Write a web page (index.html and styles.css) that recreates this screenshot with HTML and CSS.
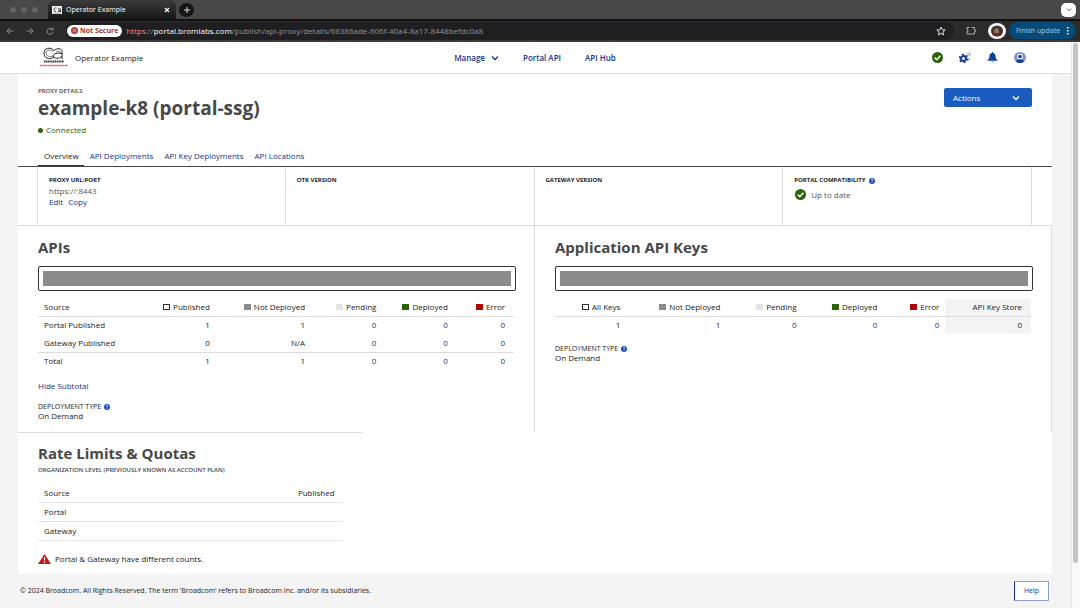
FILE: index.html
```html
<!DOCTYPE html>
<html lang="en">
<head>
<meta charset="utf-8">
<title>Operator Example</title>
<link rel="stylesheet" href="styles.css">
</head>
<body>
<svg class="defs" width="0" height="0" aria-hidden="true">
  <symbol id="check" viewBox="0 0 16 16"><circle cx="8" cy="8" r="8" fill="#2b6307"/><path d="M4 8.2l3 3 5.2-5.6" fill="none" stroke="#fff" stroke-width="2.2"/></symbol>
  <symbol id="info" viewBox="0 0 16 16"><circle cx="8" cy="8" r="8" fill="#1a4fb4"/><path d="M5.5 6c0-3.500 5-3.200 5-.4C10.500 7.500 8 7.600 8 9.600M8 11v2" fill="none" stroke="#fff" stroke-width="1.800"/></symbol>
  <symbol id="chevron" viewBox="0 0 16 16"><path d="M2 5l6 6 6-6" fill="none" stroke="currentColor" stroke-width="2.600"/></symbol>
</svg>
<div class="browser">
  <div class="tabstrip">
    <div class="lights"><i></i><i></i><i></i></div>
    <div class="tab">
      <svg class="favicon" viewBox="0 0 20 16"><rect width="20" height="16" fill="#f4f4f4"/><path d="M9 4C3 2 2 11 8 11M12 6c5-3 5 0 5 6M17 8c-5 0-6 4-1 3" fill="none" stroke="#222" stroke-width="1.800"/><path d="M3 14h14" stroke="#555"/></svg>
      <span class="tab-title">Operator Example</span>
      <button class="plain" aria-label="Close tab"><svg width="6" height="6" viewBox="0 0 6 6"><path d="M1 1l4 4M5 1L1 5" stroke="#fff" stroke-width="1.200"/></svg></button>
    </div>
    <button class="new-tab" aria-label="New tab"><svg width="8" height="8" viewBox="0 0 8 8"><path d="M4 1v6M1 4h6" stroke="#ddd"/></svg></button>
    <button class="tab-search" aria-label="Search tabs"><svg width="6" height="4" viewBox="0 0 8 6"><path d="M1 1l3 3 3-3" fill="none" stroke="#222" stroke-width="1.200"/></svg></button>
  </div>
  <div class="toolbar">
    <button class="plain nav" aria-label="Back"><svg width="8" height="8" viewBox="0 0 8 8"><path d="M7.500 4H1M4 1L1 4l3 3" fill="none" stroke="#8f8f8f"/></svg></button>
    <button class="plain nav" aria-label="Forward"><svg width="8" height="8" viewBox="0 0 8 8"><path d="M.5 4H7M4 1l3 3-3 3" fill="none" stroke="#8f8f8f"/></svg></button>
    <button class="plain nav" aria-label="Reload"><svg width="8" height="8" viewBox="0 0 8 8"><path d="M6.500 2.500A3 3 0 1 0 7 5M7 .5v2.500H4.500" fill="none" stroke="#8f8f8f"/></svg></button>
    <div class="address">
      <span class="insecure"><svg width="7" height="7" viewBox="0 0 7 7"><circle cx="3.500" cy="3.500" r="3.500" fill="#b3403a"/><path d="M2 2l3 3M5 2L2 5" stroke="#f5b5ae"/></svg>Not Secure</span>
      <span class="url"><b class="scheme">https</b>://<b>portal.bromlabs.com</b>/publish/api-proxy/details/68386ade-606f-40a4-8a17-8448befdc0a8</span>
      <button class="plain" aria-label="Bookmark"><svg width="10" height="10" viewBox="0 0 10 10"><path d="M5 1l1.200 2.800 3 .2-2.300 2 .7 3L5 7.400 2.400 9l.7-3L.8 4l3-.2z" fill="none" stroke="#ddd"/></svg></button>
    </div>
    <button class="plain" aria-label="Extensions"><svg width="10" height="9" viewBox="0 0 10 9"><path d="M1 1.500h2.500M5.500 1.500H8.500V4h1v1.500h-1V8H1V5.500h1V4H1V1.500" fill="none" stroke="#aaa"/></svg></button>
    <svg class="avatar" viewBox="0 0 18 16"><ellipse cx="9" cy="8" rx="9" ry="8" fill="#fff"/><ellipse cx="9" cy="8" rx="6" ry="5.500" fill="#403230"/><ellipse cx="8.500" cy="8.500" rx="2.500" ry="3.300" fill="#a0705c"/><path d="M4 11c2 3 8 3 10 0l-3-1H7z" fill="#6f2622"/></svg>
    <button class="update">Finish update<svg width="3" height="9" viewBox="0 0 3 9"><g fill="#fff"><rect x="1" y="1" width="1.500" height="1.500"/><rect x="1" y="4" width="1.500" height="1.500"/><rect x="1" y="7" width="1.500" height="1.500"/></g></svg></button>
  </div>
</div>

<div class="view">
<div class="page">
  <header class="app-header">
    <div class="brand">
      <svg class="logo" viewBox="0 0 28 21"><g fill="none" stroke="#222"><path d="M14 3.500C10-.5 4 1 4 6s5 7.500 10 4" stroke-width="1"/><path d="M14 3.500c3-3 8-2 8 1V12M22 6.500c-5-1-8.500 0-8.500 2.500 0 3 6 3 8.500 0" stroke-width="1"/><path d="M13 4.500C9 2 6 3 6 6s4 4.500 7 3M16 5c2-1.500 4-1 4 1" stroke-width=".6"/></g><path d="M4 14.500h20" stroke="#333" stroke-width="1.800" stroke-dasharray="1.300 .5"/><path d="M0 18.500h28" stroke="#e06060" stroke-width="1.600" stroke-dasharray="2 .5"/></svg>
      <span>Operator Example</span>
    </div>
    <nav class="main-nav">
      <a href="#">Manage <svg width="8" height="8"><use href="#chevron"/></svg></a>
      <a href="#">Portal API</a>
      <a href="#">API Hub</a>
    </nav>
    <div class="tools">
      <button class="plain" aria-label="Status"><svg width="11" height="11"><use href="#check"/></svg></button>
      <button class="plain" aria-label="Settings"><svg width="12" height="11" viewBox="0 0 12 11"><circle cx="4.500" cy="6.500" r="2.500" fill="none" stroke="#15409a" stroke-width="2"/><circle cx="4.500" cy="6.500" r="4" fill="none" stroke="#15409a" stroke-width="1.500" stroke-dasharray="2 2.190"/><circle cx="9.800" cy="2.300" r="1.300" fill="none" stroke="#8a9ccb" stroke-width="1.200" stroke-dasharray="1.400 .6"/><circle cx="10" cy="7.500" r="1" fill="#8a9ccb"/></svg></button>
      <button class="plain" aria-label="Notifications"><svg width="11" height="11" viewBox="0 0 11 11"><path d="M5 0h1v1c2 .3 2.600 1.700 2.600 3.500 0 2 .6 2.800 1.900 3.500v.8H.5V8c1.300-.7 1.900-1.500 1.900-3.500C2.400 2.700 3 1.300 5 1z" fill="#15409a"/><path d="M4 9.500h3L5.500 11z" fill="#8a9ccb"/></svg></button>
      <button class="plain" aria-label="Account"><svg width="12" height="11" viewBox="0 0 12 11"><ellipse cx="6" cy="5.500" rx="6" ry="5.500" fill="#7d94c8"/><ellipse cx="6" cy="4.700" rx="2.800" ry="2.900" fill="#fff"/><circle cx="6" cy="4.500" r="1.800" fill="#15409a"/><path d="M2 9.600c1-3 7-3 8 0-2 1.900-6 1.900-8 0z" fill="#15409a"/></svg></button>
    </div>
  </header>

  <main class="card">
    <div class="title-row">
      <div>
        <p class="eyebrow">PROXY DETAILS</p>
        <h1>example-k8 (portal-ssg)</h1>
        <p class="status"><i class="dot"></i>Connected</p>
      </div>
      <button class="actions">Actions <svg width="8" height="8"><use href="#chevron"/></svg></button>
    </div>
    <nav class="tabs">
      <a href="#" class="active">Overview</a>
      <a href="#">API Deployments</a>
      <a href="#">API Key Deployments</a>
      <a href="#">API Locations</a>
    </nav>
    <section class="facts">
      <div class="fact"><h3>PROXY URL:PORT</h3><p>https://:8443</p><p class="links"><a href="#">Edit</a><a href="#">Copy</a></p></div>
      <div class="fact"><h3>OTK VERSION</h3></div>
      <div class="fact"><h3>GATEWAY VERSION</h3></div>
      <div class="fact"><h3>PORTAL COMPATIBILITY <svg class="info" width="6" height="6"><use href="#info"/></svg></h3><p class="uptodate"><svg width="11" height="11"><use href="#check"/></svg>Up to date</p></div>
    </section>

    <div class="panels">
      <section class="panel">
        <h2>APIs</h2>
        <div class="bar"><div class="fill"></div></div>
        <table class="apis">
          <colgroup><col class="w20"><col class="w18"><col class="w20"><col class="w15"><col class="w15"><col></colgroup>
          <thead><tr><th>Source</th><th><i class="key all"></i>Published</th><th><i class="key none"></i>Not Deployed</th><th><i class="key pending"></i>Pending</th><th><i class="key deployed"></i>Deployed</th><th><i class="key error"></i>Error</th></tr></thead>
          <tbody>
            <tr><td>Portal Published</td><td>1</td><td>1</td><td><a href="#">0</a></td><td><a href="#">0</a></td><td><a href="#">0</a></td></tr>
            <tr><td>Gateway Published</td><td>0</td><td>N/A</td><td><a href="#">0</a></td><td><a href="#">0</a></td><td><a href="#">0</a></td></tr>
            <tr class="total"><td>Total</td><td>1</td><td>1</td><td><a href="#">0</a></td><td><a href="#">0</a></td><td><a href="#">0</a></td></tr>
          </tbody>
        </table>
        <button class="plain subtotal">Hide Subtotal</button>
        <div class="deployment"><h3>DEPLOYMENT TYPE <svg class="info" width="6" height="6"><use href="#info"/></svg></h3><p>On Demand</p></div>
      </section>
      <section class="panel">
        <h2>Application API Keys</h2>
        <div class="bar"><div class="fill"></div></div>
        <table class="keys">
          <colgroup><col class="w15"><col class="w21"><col class="w16"><col class="w17"><col class="w13"><col></colgroup>
          <thead><tr><th><i class="key all"></i>All Keys</th><th><i class="key none"></i>Not Deployed</th><th><i class="key pending"></i>Pending</th><th><i class="key deployed"></i>Deployed</th><th><i class="key error"></i>Error</th><th class="store">API Key Store</th></tr></thead>
          <tbody><tr><td>1</td><td>1</td><td><a href="#">0</a></td><td><a href="#">0</a></td><td><a href="#">0</a></td><td class="store">0</td></tr></tbody>
        </table>
        <div class="deployment"><h3>DEPLOYMENT TYPE <svg class="info" width="6" height="6"><use href="#info"/></svg></h3><p>On Demand</p></div>
      </section>
    </div>

    <section class="limits">
      <h2>Rate Limits &amp; Quotas</h2>
      <p class="eyebrow">ORGANIZATION LEVEL (PREVIOUSLY KNOWN AS ACCOUNT PLAN)</p>
      <table class="quotas">
        <thead><tr><th>Source</th><th>Published</th></tr></thead>
        <tbody><tr><td>Portal</td><td></td></tr><tr><td>Gateway</td><td></td></tr></tbody>
      </table>
      <p class="warning"><svg width="13" height="10" viewBox="0 0 13 10"><path d="M6.500 0L13 10H0z" fill="#c91818"/><path d="M6.500 3.200v3.300M6.500 7.500v1.300" stroke="#fff" stroke-width="1.200"/></svg>Portal &amp; Gateway have different counts.</p>
    </section>
  </main>
  <footer class="footer">
    <span>© 2024 Broadcom. All Rights Reserved. The term 'Broadcom' refers to Broadcom Inc. and/or its subsidiaries.</span>
    <button class="help">Help</button>
  </footer>
</div>
<div class="scrollbar"><div class="thumb"></div></div>
</div>
</body>
</html>
```
FILE: styles.css
```css
* { box-sizing: border-box; }
body {
  margin: 0;
  min-height: 100vh;
  display: flex;
  flex-direction: column;
  background: #f4f4f4;
  color: #222;
  font: 8px/12px "Open Sans", "Noto Sans", sans-serif;
}
h1, h2, h3, p { margin: 0; }
a { color: #14348c; text-decoration: none; }
button { font: inherit; cursor: pointer; }
svg { flex: none; }
.defs { position: absolute; }
.plain { display: inline-flex; padding: 0; border: 0; background: none; color: #14348c; }

.tabstrip {
  display: flex;
  align-items: center;
  height: 19px;
  padding: 0 4px 0 10px;
  background: #484848;
}
.lights { display: flex; gap: 5px; width: 38px; }
.lights i { width: 6px; height: 6px; border-radius: 50%; background: #636565; }
.tab {
  display: flex;
  align-items: center;
  gap: 4px;
  align-self: flex-end;
  width: 128px;
  height: 19px;
  padding: 0 6px 0 4px;
  border-radius: 6px 6px 0 0;
  background: linear-gradient(#3b3b3b, #161616);
  color: #fff;
  font-size: 7px;
}
.favicon { width: 10px; height: 8px; }
.tab-title { flex: 1; font-weight: 400; }
.new-tab, .tab-search {
  display: flex;
  align-items: center;
  justify-content: center;
  width: 15px;
  height: 14px;
  margin-left: 3px;
  padding: 0;
  border: 0;
  border-radius: 50%;
  background: #161616;
}
.tab-search { margin-left: auto; border-radius: 5px; background: #fff; }
.toolbar {
  display: flex;
  align-items: center;
  gap: 12px;
  height: 23px;
  padding: 0 4px 0 6px;
  border-top: 2px solid #101010;
  border-bottom: 2px solid #3a3a3a;
  background: #2b2b2c;
}
.address {
  flex: 1;
  display: flex;
  align-items: center;
  gap: 4px;
  height: 18px;
  padding: 0 8px 0 1px;
  border-radius: 9px;
  background: #1f1f21;
}
.insecure {
  display: flex;
  align-items: center;
  gap: 2px;
  height: 12px;
  padding: 0 4px;
  border-radius: 6px;
  background: #fff;
  color: #a83731;
  font-size: 7px;
  font-weight: 700;
}
.url { flex: 1; color: #949494; }
.url b { color: #fff; font-weight: 400; }
.url .scheme { color: #ef8a80; }
.avatar { width: 18px; height: 16px; }
.update {
  display: flex;
  align-items: center;
  justify-content: space-between;
  width: 67px;
  height: 17px;
  margin-left: -9px;
  padding: 0 7px;
  border: 0;
  border-radius: 9px;
  background: #064b77;
  color: #a7c7ed;
  font-size: 7px;
}

.view { flex: 1; display: flex; }
.page { flex: 1; display: flex; flex-direction: column; }
.scrollbar { width: 9px; padding: 1px 2px 0 1px; border-left: 1px solid #e6e6e6; background: #fafafa; }
.thumb { height: 92%; border-radius: 3px; background: #c4c4c4; }

.app-header {
  display: grid;
  grid-template-columns: 1fr auto 1fr;
  align-items: center;
  height: 32px;
  padding: 0 45px 0 40px;
  border-bottom: 1px solid #dfdfdf;
  background: #fff;
}
.brand { display: flex; align-items: center; gap: 7px; }
.logo { width: 28px; height: 21px; }
.main-nav { display: flex; gap: 24px; padding-left: 4px; font-weight: 600; }
.main-nav a { display: flex; align-items: center; gap: 6px; }
.tools { display: flex; align-items: center; justify-content: flex-end; gap: 16px; }

.card { margin: 0 19px 0 18px; background: #fff; }
.title-row {
  display: flex;
  justify-content: space-between;
  align-items: flex-start;
  padding: 12px 20px 0;
}
.eyebrow { font-size: 6px; line-height: 10px; font-weight: 600; color: #444; }
h1 { font-size: 19px; line-height: 24px; color: #484848; }
.status { display: flex; align-items: center; gap: 3px; margin-top: 4px; line-height: 12px; color: #2b6307; }
.dot { width: 5px; height: 5px; border-radius: 50%; background: #2b6307; }
.actions {
  display: flex;
  align-items: center;
  justify-content: space-between;
  width: 88px;
  height: 19px;
  margin-top: 2px;
  padding: 0 12px 0 9px;
  border: 0;
  border-radius: 2px;
  background: #1a5bc0;
  color: #fff;
}
.tabs {
  display: flex;
  margin-top: 10px;
  padding: 0 20px;
  border-bottom: 1px solid #444;
}
.tabs a { padding: 4px 5px 3px 6px; line-height: 12px; }
.tabs .active { border-bottom: 1px solid #14348c; color: #222; }

.facts {
  display: grid;
  grid-template-columns: repeat(4, 1fr);
  height: 58px;
  padding: 0 20px 0 19px;
}
.fact { padding: 9px 11px; border-right: 1px solid #dcdcdc; line-height: 11px; color: #555; }
.fact:first-child { border-left: 1px solid #dcdcdc; }
h3 { display: flex; align-items: center; gap: 3px; font-size: 7px; line-height: 9px; font-weight: 400; color: #222; }
.fact h3 { font-size: 6px; font-weight: 700; }
.links, .uptodate { display: flex; gap: 5px; }
.uptodate { align-items: center; margin-top: 4px; padding-left: 1px; }

.panels { display: grid; grid-template-columns: 1fr 1fr; border-top: 1px solid #dcdcdc; }
.panel { min-height: 206px; padding: 11px 18px 10px 20px; border-right: 1px solid #dcdcdc; }
h2 { font-size: 15px; line-height: 20px; color: #484848; }
.bar { margin-top: 9px; padding: 4px; border: 1px solid #333; border-radius: 2px; }
.fill { height: 15px; background: #8b8b8b; }
table { width: 100%; border-collapse: collapse; table-layout: fixed; }
th, td { padding: 0 6px; text-align: right; font-weight: 400; white-space: nowrap; }
th { height: 17px; border-bottom: 1px solid #dcdcdc; }
td { height: 18px; }
.panel table { width: calc(100% - 2px); margin-top: 8px; }
.apis th, .apis td, .keys .store { padding-right: 9px; }
.apis th:first-child, .apis td:first-child, .quotas th:first-child, .quotas td:first-child { text-align: left; }
.total td { border-top: 1px solid #dcdcdc; }
.store { background: #f4f4f4; }
.w13 { width: 13%; }
.w15 { width: 15%; }
.w16 { width: 16%; }
.w17 { width: 17%; }
.w18 { width: 18%; }
.w20 { width: 20%; }
.w21 { width: 21%; }
.key { display: inline-block; width: 7px; height: 6px; margin-right: 3px; }
.all { border: 1px solid #333; }
.none { background: #8b8b8b; }
.pending { background: #e4e4e4; }
.deployed { background: #2b6307; }
.error { background: #ac0606; }
.subtotal { margin-top: 10px; }
.deployment { margin-top: 10px; line-height: 9px; }

.limits { width: 33.333%; padding: 10px 20px 9px; border-top: 1px solid #dcdcdc; }
.limits .eyebrow { margin-top: 2px; }
.quotas { margin-top: 10px; }
.quotas th, .quotas td { padding-right: 8px; border-bottom: 1px solid #e8e8e8; }
.quotas td { height: 19px; }
.warning { display: flex; align-items: center; gap: 4px; margin-top: 12px; }

.footer {
  display: flex;
  align-items: center;
  justify-content: space-between;
  flex: 1;
  padding: 0 22px 0 20px;
  font-size: 7px;
}
.help { width: 35px; height: 20px; padding: 0; border: 1px solid #8d9fce; border-left-color: #14348c; border-radius: 1px; background: #fff; color: #14348c; }
```
